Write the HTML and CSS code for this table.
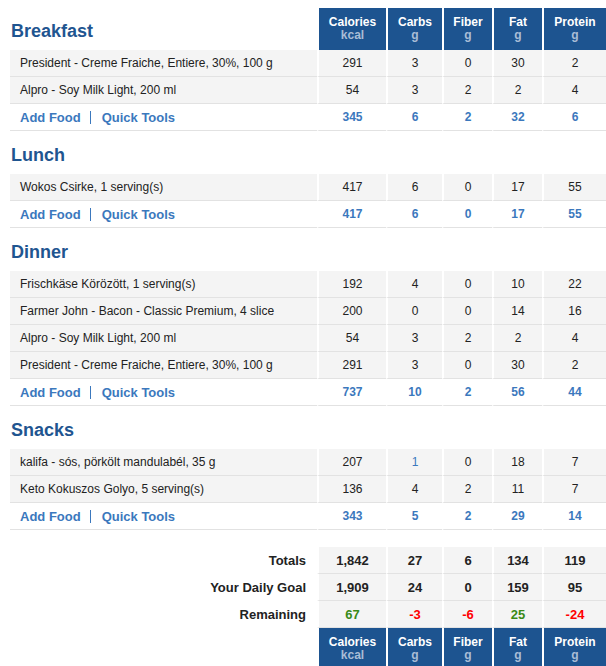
FILE: index.html
```html
<!DOCTYPE html>
<html>

<head>
    <title>Food Diary</title>
    <link rel="stylesheet" href="styles.css">
</head>

<body>
    <table class="diary">
        <colgroup>
            <col class="col-name">
            <col class="col-cal">
            <col class="col-carbs">
            <col class="col-fiber">
            <col class="col-fat">
            <col class="col-protein">
        </colgroup>

        <!-- Breakfast -->
        <tbody>
            <tr class="meal-header first">
                <td class="meal-title">Breakfast</td>
                <td class="nutr-head">Calories<span>kcal</span></td>
                <td class="nutr-head">Carbs<span>g</span></td>
                <td class="nutr-head">Fiber<span>g</span></td>
                <td class="nutr-head">Fat<span>g</span></td>
                <td class="nutr-head">Protein<span>g</span></td>
            </tr>
            <tr class="food-row">
                <td class="food-name">President - Creme Fraiche, Entiere, 30%, 100 g</td>
                <td>291</td><td>3</td><td>0</td><td>30</td><td>2</td>
            </tr>
            <tr class="food-row">
                <td class="food-name">Alpro - Soy Milk Light, 200 ml</td>
                <td>54</td><td>3</td><td>2</td><td>2</td><td>4</td>
            </tr>
            <tr class="add-row">
                <td class="add-links"><a href="#">Add Food</a><span class="sep"></span><a href="#">Quick Tools</a></td>
                <td>345</td><td>6</td><td>2</td><td>32</td><td>6</td>
            </tr>
        </tbody>

        <!-- Lunch -->
        <tbody>
            <tr class="meal-header">
                <td class="meal-title">Lunch</td>
                <td></td><td></td><td></td><td></td><td></td>
            </tr>
            <tr class="food-row">
                <td class="food-name">Wokos Csirke, 1 serving(s)</td>
                <td>417</td><td>6</td><td>0</td><td>17</td><td>55</td>
            </tr>
            <tr class="add-row">
                <td class="add-links"><a href="#">Add Food</a><span class="sep"></span><a href="#">Quick Tools</a></td>
                <td>417</td><td>6</td><td>0</td><td>17</td><td>55</td>
            </tr>
        </tbody>

        <!-- Dinner -->
        <tbody>
            <tr class="meal-header">
                <td class="meal-title">Dinner</td>
                <td></td><td></td><td></td><td></td><td></td>
            </tr>
            <tr class="food-row">
                <td class="food-name">Frischkäse Körözött, 1 serving(s)</td>
                <td>192</td><td>4</td><td>0</td><td>10</td><td>22</td>
            </tr>
            <tr class="food-row">
                <td class="food-name">Farmer John - Bacon - Classic Premium, 4 slice</td>
                <td>200</td><td>0</td><td>0</td><td>14</td><td>16</td>
            </tr>
            <tr class="food-row">
                <td class="food-name">Alpro - Soy Milk Light, 200 ml</td>
                <td>54</td><td>3</td><td>2</td><td>2</td><td>4</td>
            </tr>
            <tr class="food-row">
                <td class="food-name">President - Creme Fraiche, Entiere, 30%, 100 g</td>
                <td>291</td><td>3</td><td>0</td><td>30</td><td>2</td>
            </tr>
            <tr class="add-row">
                <td class="add-links"><a href="#">Add Food</a><span class="sep"></span><a href="#">Quick Tools</a></td>
                <td>737</td><td>10</td><td>2</td><td>56</td><td>44</td>
            </tr>
        </tbody>

        <!-- Snacks -->
        <tbody>
            <tr class="meal-header">
                <td class="meal-title">Snacks</td>
                <td></td><td></td><td></td><td></td><td></td>
            </tr>
            <tr class="food-row">
                <td class="food-name">kalifa - sós, pörkölt mandulabél, 35 g</td>
                <td>207</td><td class="link-num">1</td><td>0</td><td>18</td><td>7</td>
            </tr>
            <tr class="food-row">
                <td class="food-name">Keto Kokuszos Golyo, 5 serving(s)</td>
                <td>136</td><td>4</td><td>2</td><td>11</td><td>7</td>
            </tr>
            <tr class="add-row">
                <td class="add-links"><a href="#">Add Food</a><span class="sep"></span><a href="#">Quick Tools</a></td>
                <td>343</td><td>5</td><td>2</td><td>29</td><td>14</td>
            </tr>
        </tbody>

        <!-- Totals -->
        <tbody>
            <tr class="spacer"><td colspan="6"></td></tr>
            <tr class="total-row">
                <td class="total-label">Totals</td>
                <td>1,842</td><td>27</td><td>6</td><td>134</td><td>119</td>
            </tr>
            <tr class="total-row">
                <td class="total-label">Your Daily Goal</td>
                <td>1,909</td><td>24</td><td>0</td><td>159</td><td>95</td>
            </tr>
            <tr class="total-row">
                <td class="total-label">Remaining</td>
                <td class="pos">67</td><td class="neg">-3</td><td class="neg">-6</td><td class="pos">25</td><td class="neg">-24</td>
            </tr>
            <tr class="meal-header first">
                <td></td>
                <td class="nutr-head">Calories<span>kcal</span></td>
                <td class="nutr-head">Carbs<span>g</span></td>
                <td class="nutr-head">Fiber<span>g</span></td>
                <td class="nutr-head">Fat<span>g</span></td>
                <td class="nutr-head">Protein<span>g</span></td>
            </tr>
        </tbody>
    </table>
</body>

</html>
```

FILE: styles.css
```css
body {
    margin: 0;
    padding: 8px 0 0 10px;
    font-family: "Liberation Sans", Arial, sans-serif;
    color: #222;
    background: #fff;
}

.diary {
    width: 596px;
    table-layout: fixed;
    border-collapse: separate;
    border-spacing: 0;
}

.col-name { width: 307px; }
.col-cal { width: 69px; }
.col-carbs { width: 56px; }
.col-fiber { width: 50px; }
.col-fat { width: 50px; }
.col-protein { width: 64px; }

.diary td {
    padding: 0;
    box-sizing: border-box;
}

/* meal headers */
.meal-header {
    height: 43px;
}

.meal-header.first {
    height: 42px;
}

.meal-title {
    font-size: 18px;
    font-weight: bold;
    line-height: 22px;
    color: #1f5590;
    vertical-align: bottom;
    padding: 0 0 8px 1px !important;
}

.nutr-head {
    background: #1d5490;
    color: #fff;
    font-size: 12px;
    font-weight: bold;
    line-height: 13px;
    text-align: center;
    vertical-align: top;
    padding-top: 8px !important;
    border-left: 2px solid #fff;
}

.nutr-head span {
    display: block;
    color: #a9bdd6;
}

/* food rows */
.food-row {
    height: 27px;
}

.food-row td {
    background: #f4f4f4;
    border-bottom: 1px solid #e2e2e2;
    border-left: 2px solid #fff;
    font-size: 12px;
    text-align: center;
}

.food-row td.food-name {
    border-left: none;
    text-align: left;
    padding-left: 10px;
}

.food-row td.link-num {
    color: #3b78bd;
}

/* add food rows */
.add-row {
    height: 27px;
}

.add-row td {
    border-bottom: 1px solid #e2e2e2;
    border-left: 2px solid #fff;
    font-size: 12px;
    font-weight: bold;
    color: #3b78bd;
    text-align: center;
}

.add-row td.add-links {
    border-left: none;
    text-align: left;
    padding-left: 10px;
}

.add-links a {
    font-size: 13px;
    color: #3b78bd;
    text-decoration: none;
}

.add-links .sep {
    display: inline-block;
    width: 1px;
    height: 13px;
    background: #3b78bd;
    margin: 0 11px 0 9px;
    vertical-align: -2px;
}

/* totals */
.spacer {
    height: 17px;
}

.total-row {
    height: 27px;
}

.total-row td {
    background: #f4f4f4;
    border-bottom: 1px solid #e2e2e2;
    border-left: 2px solid #fff;
    font-size: 13px;
    font-weight: bold;
    text-align: center;
}

.total-row td.total-label {
    background: #fff;
    border: none;
    text-align: right;
    padding-right: 11px;
}

.total-row td.pos {
    color: #3a8a16;
}

.total-row td.neg {
    color: #f00;
}
```
